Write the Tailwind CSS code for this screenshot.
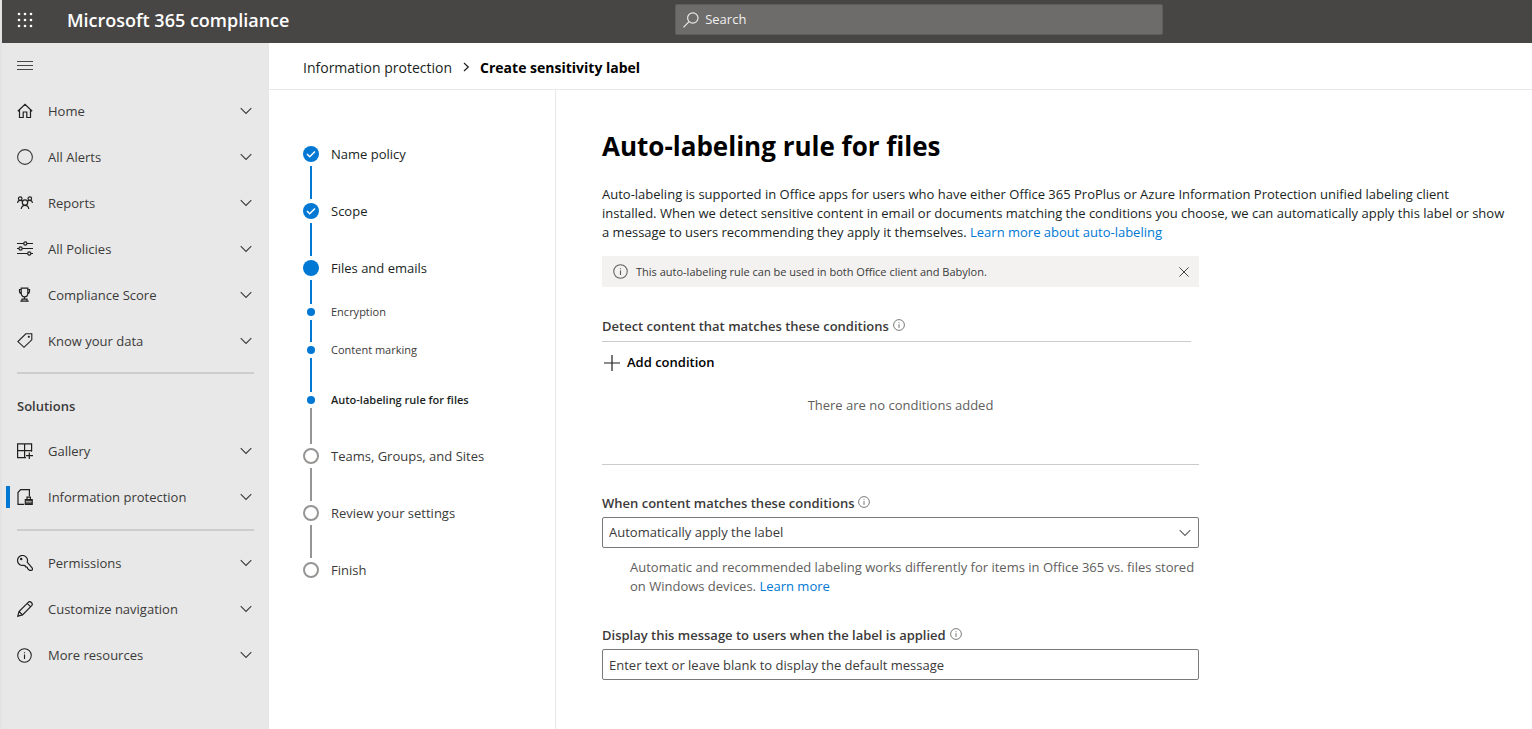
<!DOCTYPE html>
<html lang="en">
<head>
<meta charset="utf-8">
<meta name="viewport" content="width=device-width, initial-scale=1">
<title>Create sensitivity label - Microsoft 365 compliance</title>
<script src="https://cdn.jsdelivr.net/npm/@tailwindcss/browser@4"></script>
</head>
<body class="min-h-screen flex flex-col bg-white border-l-2 border-[#e3e3e3] font-['Open_Sans','Noto_Sans',sans-serif] text-[13px] leading-[19px] text-[#3b3a39]">

<!-- Symbols shared by several controls -->
<svg class="hidden" aria-hidden="true">
  <symbol id="chevron" viewBox="0 0 12 8"><path d="M.7 1.2 6 6.5l5.300-5.300" fill="none" stroke="currentColor" stroke-width="1.100"/></symbol>
  <symbol id="info" viewBox="0 0 16 16"><circle cx="8" cy="8" r="7.200" fill="none" stroke="currentColor" stroke-width="1.100"/><path d="M8 7v4.800M8 4.400v1.200" stroke="currentColor" stroke-width="1.200"/></symbol>
  <symbol id="check" viewBox="0 0 16 16"><circle cx="8" cy="8" r="8" fill="#0078d4"/><path d="m4 8 2.700 2.700 5.300-5.200" fill="none" stroke="#fff" stroke-width="1.500"/></symbol>
</svg>

<header class="flex items-center h-[43px] bg-[#484644] text-white">
  <div class="flex items-center w-[44%] pl-[15px] pb-1">
    <button aria-label="App launcher" class="w-4 h-4 mr-[34px]">
      <svg viewBox="0 0 16 16" class="w-4 h-4" fill="#fff"><circle cx="2" cy="2" r="1.300"/><circle cx="8" cy="2" r="1.300"/><circle cx="14" cy="2" r="1.300"/><circle cx="2" cy="8" r="1.300"/><circle cx="8" cy="8" r="1.300"/><circle cx="14" cy="8" r="1.300"/><circle cx="2" cy="14" r="1.300"/><circle cx="8" cy="14" r="1.300"/><circle cx="14" cy="14" r="1.300"/></svg>
    </button>
    <span class="text-[18px] leading-6 font-semibold">Microsoft 365 compliance</span>
  </div>
  <label class="flex items-center gap-1.5 w-[488px] h-[31px] pl-[7px] mb-1 rounded-xs bg-[#6d6c6a] border border-[#5e5d5b]">
    <svg viewBox="0 0 16 16" class="w-4 h-4 shrink-0" fill="none" stroke="#e8e8e8" stroke-width="1.200"><circle cx="9.800" cy="6" r="5.200"/><path d="M6 9.700.5 15.300"/></svg>
    <input type="search" aria-label="Search" placeholder="Search" class="flex-1 min-w-0 bg-transparent outline-none placeholder:text-[#f0f0f0]">
  </label>
</header>

<div class="flex flex-1">
  <nav aria-label="Main" class="w-[267px] shrink-0 bg-[#e8e8e8] px-[15px]">
    <button aria-label="Collapse navigation" class="flex items-center h-[45px]">
      <svg viewBox="0 0 16 16" class="w-4 h-4" stroke="#484644" stroke-width="1"><path d="M0 3.500h16M0 7.500h16M0 11.500h16"/></svg>
    </button>
    <ul>
      <li><button class="flex items-center w-full h-[46px] pr-0.5 text-left">
        <svg viewBox="0 0 16 16" class="w-4 h-4 mr-[15px]" fill="none" stroke="#201f1e" stroke-width="1.200"><path d="M.8 8.200 8 1.300l7.200 6.900M2.500 6.800v7.700h3.700V9h3.600v5.500h3.700V6.800"/></svg>
        <span class="flex-1">Home</span><svg class="w-3 h-2"><use href="#chevron"/></svg></button></li>
      <li><button class="flex items-center w-full h-[46px] pr-0.5 text-left">
        <svg viewBox="0 0 16 16" class="w-4 h-4 mr-[15px]" fill="none" stroke="#3b3a39" stroke-width="1.100"><circle cx="8" cy="8" r="7.400"/></svg>
        <span class="flex-1">All Alerts</span><svg class="w-3 h-2"><use href="#chevron"/></svg></button></li>
      <li><button class="flex items-center w-full h-[46px] pr-0.5 text-left">
        <svg viewBox="0 0 16 16" class="w-4 h-4 mr-[15px]" fill="none" stroke="#201f1e" stroke-width="1.200"><circle cx="3.200" cy="3.600" r="1.800"/><circle cx="12.800" cy="3.600" r="1.800"/><circle cx="8" cy="7.600" r="2.700"/><path d="M.5 7.800c.2-1.500 1.200-2.400 2.700-2.400 1.100 0 1.900.4 2.600 1.300M15.500 7.800c-.2-1.500-1.200-2.400-2.700-2.400-1.100 0-1.900.4-2.600 1.300M4.200 14c.3-2.300 1.800-3.700 3.800-3.700s3.500 1.400 3.800 3.700"/></svg>
        <span class="flex-1">Reports</span><svg class="w-3 h-2"><use href="#chevron"/></svg></button></li>
      <li><button class="flex items-center w-full h-[46px] pr-0.5 text-left">
        <svg viewBox="0 0 16 16" class="w-4 h-4 mr-[15px]" fill="none" stroke="#201f1e" stroke-width="1.200"><path d="M0 2.500h6.700M10 2.500h6M0 7.500h2M5.200 7.500H16M0 12.500h10.700M14 12.500h2"/><circle cx="8.300" cy="2.500" r="1.600"/><circle cx="3.600" cy="7.500" r="1.600"/><circle cx="12.300" cy="12.500" r="1.600"/></svg>
        <span class="flex-1">All Policies</span><svg class="w-3 h-2"><use href="#chevron"/></svg></button></li>
      <li><button class="flex items-center w-full h-[46px] pr-0.5 text-left">
        <svg viewBox="0 0 16 16" class="w-4 h-4 mr-[15px]" fill="none" stroke="#201f1e" stroke-width="1.200"><path d="M4.200 1.200h6.600v5c0 2-1.300 3.600-3.300 3.600S4.200 8.200 4.200 6.200zM4.200 2.500H2.500v2c0 1.300.8 2 2 2.200M10.800 2.500h1.700v2c0 1.300-.8 2-2 2.200M7.500 9.800v2.400M5 14.200v-2h5v2M3.300 14.200h8.400"/></svg>
        <span class="flex-1">Compliance Score</span><svg class="w-3 h-2"><use href="#chevron"/></svg></button></li>
      <li><button class="flex items-center w-full h-[46px] pr-0.5 text-left">
        <svg viewBox="0 0 16 16" class="w-4 h-4 mr-[15px]" fill="none" stroke="#201f1e" stroke-width="1.100"><path d="M8.800.8h6v6L7 14.300.900 8.600z"/><circle cx="11.800" cy="3.700" r=".5" fill="#201f1e"/></svg>
        <span class="flex-1">Know your data</span><svg class="w-3 h-2"><use href="#chevron"/></svg></button></li>
    </ul>
    <hr class="mt-2 border-t-2 border-[#cdcdcd]">
    <h2 class="flex items-center h-11 mt-2.5 font-semibold">Solutions</h2>
    <ul>
      <li><button class="flex items-center w-full h-[46px] pr-0.5 text-left">
        <svg viewBox="0 0 16 16" class="w-4 h-4 mr-[15px]" fill="none" stroke="#201f1e" stroke-width="1.200"><path d="M9 14.700H.6V.8h14v8M7.600.8v13.900M.6 7.700h14M12.300 9.500v6.500M9 12.700h7"/></svg>
        <span class="flex-1">Gallery</span><svg class="w-3 h-2"><use href="#chevron"/></svg></button></li>
      <li class="relative"><span class="absolute -left-[11px] top-3 w-1 h-[22px] bg-[#0078d4]"></span><button aria-current="page" class="flex items-center w-full h-[46px] pr-0.5 text-left">
        <svg viewBox="0 0 16 16" class="w-4 h-4 mr-[15px]" fill="none" stroke="#201f1e" stroke-width="1.200"><path d="M7 15.400H1V3.600L3.600.7h8.800v6.500"/><path d="M8.300 10.600h6.900v4.700H8.300z" fill="#484644"/><path d="M10 10V8.200h3.400V10"/><path d="M8.800 12.800h5.900" stroke="#e8e8e8" stroke-width=".8"/></svg>
        <span class="flex-1">Information protection</span><svg class="w-3 h-2"><use href="#chevron"/></svg></button></li>
    </ul>
    <hr class="my-[9px] border-t-2 border-[#cdcdcd]">
    <ul>
      <li><button class="flex items-center w-full h-[46px] pr-0.5 text-left">
        <svg viewBox="0 0 16 16" class="w-4 h-4 mr-[15px]" fill="none" stroke="#201f1e" stroke-width="1.200"><path d="M10.200 7.200A5 5 0 1 0 6.700 10.300l1.300.3.700 1.300 1.500.3.500 1.400 1.700 1.600c.6.400 2.800.3 2.900-.2.200-.8.200-1.700-.2-2.200z"/><circle cx="4.200" cy="4" r=".6" fill="#201f1e"/></svg>
        <span class="flex-1">Permissions</span><svg class="w-3 h-2"><use href="#chevron"/></svg></button></li>
      <li><button class="flex items-center w-full h-[46px] pr-0.5 text-left">
        <svg viewBox="0 0 16 16" class="w-4 h-4 mr-[15px]" fill="none" stroke="#201f1e" stroke-width="1.200"><path d="m.8 15.200 1.200-4.700L11.200 1.300c1.900-1.900 5.300 1.200 3.500 3.300L5.500 13.900zM10.200 2.300l3.500 3.500M2 10.500l3.500 3.400"/></svg>
        <span class="flex-1">Customize navigation</span><svg class="w-3 h-2"><use href="#chevron"/></svg></button></li>
      <li><button class="flex items-center w-full h-[46px] pr-0.5 text-left">
        <svg class="w-[15px] h-[15px] mr-4 text-[#201f1e]"><use href="#info"/></svg>
        <span class="flex-1">More resources</span><svg class="w-3 h-2"><use href="#chevron"/></svg></button></li>
    </ul>
  </nav>

  <div class="flex flex-col flex-1 min-w-0">
    <nav aria-label="Breadcrumb" class="flex items-center h-[47px] pt-0.5 pl-[34px] border-b border-[#e8e8e8] text-[14px] text-black">
      <a href="#" class="text-[#201f1e]">Information protection</a>
      <svg viewBox="0 0 8 10" class="w-2 h-2.5 mx-2.5" fill="none" stroke="#201f1e" stroke-width="1.200"><path d="m2 1 4.300 4L2 9"/></svg>
      <span aria-current="page" class="font-bold">Create sensitivity label</span>
    </nav>

    <div class="flex flex-1">
      <ol class="w-[287px] shrink-0 border-r border-[#e8e8e8] pl-[34px] pt-14 text-[#201f1e]">
        <li class="flex h-[57px] gap-3">
          <div class="flex flex-col items-center w-4"><svg class="w-4 h-4 shrink-0"><use href="#check"/></svg><span class="flex-1 w-0.5 my-1 bg-[#0078d4]"></span></div>
          <span class="flex items-center h-4">Name policy</span></li>
        <li class="flex h-[57px] gap-3">
          <div class="flex flex-col items-center w-4"><svg class="w-4 h-4 shrink-0"><use href="#check"/></svg><span class="flex-1 w-0.5 my-1 bg-[#0078d4]"></span></div>
          <span class="flex items-center h-4">Scope</span></li>
        <li class="flex h-12 gap-3">
          <div class="flex flex-col items-center w-4"><span class="w-4 h-4 rounded-full bg-[#0078d4]"></span><span class="flex-1 w-0.5 my-1 bg-[#0078d4]"></span></div>
          <span class="flex items-center h-4">Files and emails</span></li>
        <li class="flex h-[38px] gap-3 text-[11px] leading-4 text-[#3b3a39]">
          <div class="flex flex-col items-center w-4"><span class="w-2 h-2 rounded-full bg-[#0078d4]"></span><span class="flex-1 w-0.5 my-1 bg-[#0078d4]"></span></div>
          <span class="flex items-center h-2">Encryption</span></li>
        <li class="flex h-[50px] gap-3 text-[11px] leading-4 text-[#3b3a39]">
          <div class="flex flex-col items-center w-4"><span class="w-2 h-2 rounded-full bg-[#0078d4]"></span><span class="flex-1 w-0.5 my-1 bg-[#0078d4]"></span></div>
          <span class="flex items-center h-2">Content marking</span></li>
        <li aria-current="step" class="flex h-[52px] gap-3 text-[11px] leading-4 font-semibold">
          <div class="flex flex-col items-center w-4"><span class="w-2 h-2 rounded-full bg-[#0078d4]"></span><span class="flex-1 w-0.5 my-1 bg-[#979593]"></span></div>
          <span class="flex items-center h-2">Auto-labeling rule for files</span></li>
        <li class="flex h-[57px] gap-3 text-[#3b3a39]">
          <div class="flex flex-col items-center w-4"><span class="w-4 h-4 rounded-full border-2 border-[#979593]"></span><span class="flex-1 w-0.5 my-1 bg-[#979593]"></span></div>
          <span class="flex items-center h-4">Teams, Groups, and Sites</span></li>
        <li class="flex h-[57px] gap-3 text-[#3b3a39]">
          <div class="flex flex-col items-center w-4"><span class="w-4 h-4 rounded-full border-2 border-[#979593]"></span><span class="flex-1 w-0.5 my-1 bg-[#979593]"></span></div>
          <span class="flex items-center h-4">Review your settings</span></li>
        <li class="flex gap-3 text-[#3b3a39]">
          <div class="flex flex-col items-center w-4"><span class="w-4 h-4 rounded-full border-2 border-[#979593]"></span></div>
          <span class="flex items-center h-4">Finish</span></li>
      </ol>

      <main class="flex-1 min-w-0 pl-[46px] pr-5 pt-[38px]">
        <h1 class="text-[26px] leading-9 font-bold text-black">Auto-labeling rule for files</h1>
        <p class="mt-[21px] max-w-[904px] text-[#201f1e]">Auto-labeling is supported in Office apps for users who have either Office 365 ProPlus or Azure Information Protection unified labeling client installed. When we detect sensitive content in email or documents matching the conditions you choose, we can automatically apply this label or show a message to users recommending they apply it themselves. <a href="#" class="text-[#0078d4]">Learn more about auto-labeling</a></p>

        <form class="max-w-[597px]">
          <div role="status" class="flex items-center h-[31px] mt-3.5 pl-[11px] pr-2.5 bg-[#f3f2f1] text-[11px] text-[#3b3a39]">
            <svg class="w-[15px] h-[15px] mr-2 text-[#605e5c]"><use href="#info"/></svg>
            <span class="flex-1">This auto-labeling rule can be used in both Office client and Babylon.</span>
            <button type="button" aria-label="Dismiss"><svg viewBox="0 0 10 10" class="w-2.5 h-2.5" stroke="#484644"><path d="m.4.4 9.200 9.200M9.600.4.4 9.600"/></svg></button>
          </div>

          <section>
            <h2 class="flex gap-1 mt-[30px] font-semibold">Detect content that matches these conditions
              <button type="button" aria-label="About conditions" class="h-4"><svg class="w-3 h-3 text-[#605e5c]"><use href="#info"/></svg></button></h2>
            <hr class="mt-[5px] mr-2 border-[#cdcbc9]">
            <button type="button" class="flex items-center gap-[7px] mt-[11px] pl-0.5 font-semibold text-black">
              <svg viewBox="0 0 16 16" class="w-4 h-4" stroke="#201f1e" stroke-width="1.200"><path d="M8 0v16M0 8h16"/></svg>Add condition</button>
            <p class="mt-6 text-center text-[#605e5c]">There are no conditions added</p>
            <hr class="mt-[49px] border-[#cdcbc9]">
          </section>

          <div class="flex gap-1 mt-[29px]">
            <label for="action" class="font-semibold">When content matches these conditions</label>
            <button type="button" aria-label="About matching content" class="h-4"><svg class="w-3 h-3 text-[#605e5c]"><use href="#info"/></svg></button>
          </div>
          <div class="relative mt-1">
            <select id="action" class="block w-full h-[31px] px-1.5 appearance-none rounded-xs border border-[#7a7977] bg-white">
              <option>Automatically apply the label</option>
              <option>Recommend that users apply the label</option>
            </select>
            <svg class="absolute right-2 top-3 w-3 h-2 pointer-events-none text-[#605e5c]"><use href="#chevron"/></svg>
          </div>
          <p class="mt-2.5 pl-7 text-[#605e5c]">Automatic and recommended labeling works differently for items in Office 365 vs. files stored on Windows devices. <a href="#" class="text-[#0078d4]">Learn more</a></p>

          <div class="flex gap-1 mt-[30px]">
            <label for="message" class="font-semibold">Display this message to users when the label is applied</label>
            <button type="button" aria-label="About the message" class="h-4"><svg class="w-3 h-3 text-[#605e5c]"><use href="#info"/></svg></button>
          </div>
          <input id="message" type="text" placeholder="Enter text or leave blank to display the default message" class="block w-full h-[31px] mt-1 px-1.5 rounded-xs border border-[#7a7977] placeholder:text-[#3b3a39]">
        </form>
      </main>
    </div>
  </div>
</div>
</body>
</html>
